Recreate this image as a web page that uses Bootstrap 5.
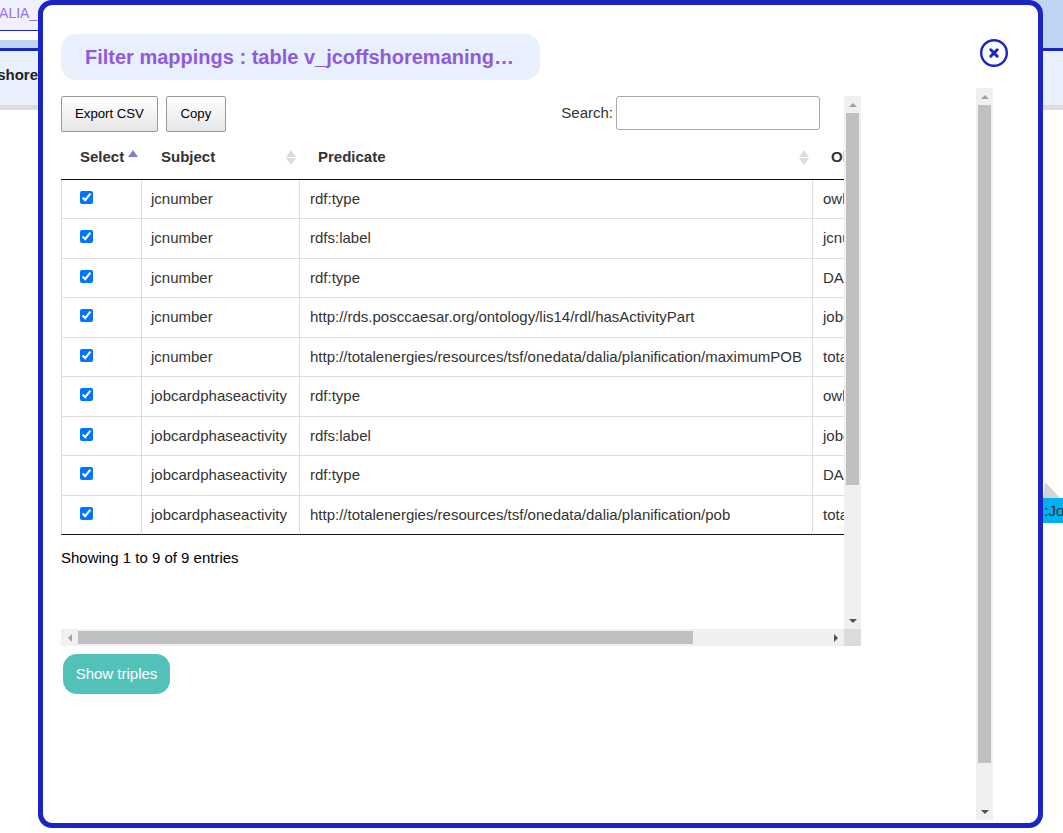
<!DOCTYPE html>
<html lang="en">
<head>
  <meta charset="UTF-8" />
  <meta name="viewport" content="width=device-width, initial-scale=1.0" />
  <title>Filter mappings</title>
  <link href="https://cdn.jsdelivr.net/npm/bootstrap@5.3.3/dist/css/bootstrap.min.css" rel="stylesheet" />
  <style>
    html, body {
      height: 100%;
      overflow: hidden;
    }
    body {
      background-color: #fff;
      color: #333;
      font-family: "Liberation Sans", Arial, sans-serif;
      font-size: 15px;
    }
    /* page behind the dialog */
    .tab-strip {
      height: 31px;
      background-color: #f1f0fd;
      border-bottom: 1px solid #1b25c3;
      color: #9575e6;
      font-size: 14px;
      padding-top: 3px;
      padding-left: 0;
      white-space: nowrap;
      overflow: hidden;
    }
    .tab-strip span {
      margin-left: -11px;
    }
    .tab-gap {
      height: 9px;
      background-color: #fff;
    }
    .back-band {
      height: 8px;
      background-color: #bfd3f2;
    }
    .back-head {
      height: 62px;
      background-color: #e8effd;
      border-top: 3px solid #1b25c3;
      border-bottom: 5px solid #dcdcdc;
      font-weight: 700;
      padding-top: 13px;
      white-space: nowrap;
      overflow: hidden;
      color: #222;
    }
    .back-head span {
      margin-left: -22px;
      display: inline-block;
    }
    .right-fill {
      position: absolute;
      top: 0;
      right: 0;
      width: 30px;
      height: 40px;
      background-color: #bfd3f2;
    }
    .node-fold {
      position: absolute;
      left: 1043px;
      top: 482px;
      width: 0;
      height: 0;
      border-left: 2px solid transparent;
      border-right: 15px solid transparent;
      border-bottom: 16px solid #d3d3d3;
    }
    .node-label {
      position: absolute;
      left: 1036px;
      top: 498px;
      width: 60px;
      height: 25px;
      background-color: #00b0f0;
      color: #333;
      line-height: 25px;
      white-space: nowrap;
    }
    /* dialog */
    .dialog-box {
      position: absolute;
      left: 38px;
      top: 0;
      width: 1005px;
      height: 828px;
      background-color: #fff;
      border: 5px solid #1b25c3;
      border-radius: 14px;
      padding: 29px 0 0 18px;
      display: flex;
    }
    .dialog-main {
      width: 800px;
    }
    .dialog-side {
      width: 32px;
      margin-left: 115px;
      display: flex;
      flex-direction: column;
    }
    .close-round {
      align-self: flex-end;
      margin-top: 5px;
      width: 28px;
      height: 28px;
      display: block;
    }
    .title-pill {
      width: 479px;
      height: 46px;
      line-height: 46px;
      padding-left: 24px;
      background-color: #e8effd;
      border-radius: 15px;
      color: #8f5bdc;
      font-size: 20px;
      font-weight: 700;
      white-space: nowrap;
    }
    .scroll-frame {
      margin-top: 16px;
      display: grid;
      grid-template-columns: 783px 17px;
      grid-template-rows: 533px 17px;
    }
    .scroll-view {
      overflow: hidden;
    }
    /* fake scrollbars, same look as the browser's */
    .vbar, .hbar {
      background-color: #f0f0f0;
      display: flex;
    }
    .vbar {
      flex-direction: column;
      align-items: center;
      width: 17px;
    }
    .hbar {
      align-items: center;
      height: 17px;
    }
    .vbar-thumb {
      width: 13px;
      background-color: #c0c0c0;
    }
    .hbar-thumb {
      height: 13px;
      background-color: #c0c0c0;
    }
    .bar-corner {
      background-color: #dcdcdc;
    }
    .bar-arrow {
      flex: 0 0 17px;
      display: flex;
      align-items: center;
      justify-content: center;
      width: 17px;
      height: 17px;
    }
    .tri-up { width: 0; height: 0; border: 4px solid transparent; border-top: 0; border-bottom: 4px solid #a3a3a3; }
    .tri-down { width: 0; height: 0; border: 4px solid transparent; border-bottom: 0; border-top: 4px solid #505050; }
    .tri-left { width: 0; height: 0; border: 4px solid transparent; border-left: 0; border-right: 4px solid #a3a3a3; }
    .tri-right { width: 0; height: 0; border: 4px solid transparent; border-right: 0; border-left: 4px solid #505050; }
    .side-bar {
      height: 732px;
      margin-top: 21px;
    }
    .tool-row {
      height: 36px;
      width: 759px;
    }
    .dt-btn {
      height: 36px;
      min-width: 60px;
      padding: 0 13px;
      background: linear-gradient(#fff, #e6e6e6);
      border: 1px solid #999;
      border-radius: 2px;
      color: #000;
      font-size: 13.2px;
      line-height: 34px;
    }
    .search-box {
      width: 204px;
      height: 34px;
      border: 1px solid #aaa;
      border-radius: 3px;
      background-color: #fff;
      margin-left: 3px;
    }
    .search-wrap {
      height: 34px;
    }
    .map-table {
      width: 1001px;
      table-layout: fixed;
      border-collapse: separate;
      border-spacing: 0;
      margin: 0;
      color: #333;
    }
    .map-table th {
      position: relative;
      height: 47.9px;
      padding: 3px 0 0 19px;
      vertical-align: middle;
      font-weight: 700;
      font-size: 15px;
      border-bottom: 1px solid #111;
      color: #333;
    }
    .map-table th:nth-child(n+3) {
      padding-left: 18px;
    }
    .map-table td {
      height: 39.5px;
      padding: 0 10px;
      vertical-align: middle;
      border-bottom: 1px solid #ddd;
      border-right: 1px solid #ddd;
      white-space: nowrap;
      color: #333;
    }
    .map-table td:first-child {
      border-left: 1px solid #ddd;
      padding-left: 18px;
    }
    .map-table td:nth-child(2) {
      padding-left: 9px;
    }
    .map-table tr:last-child td {
      border-bottom: 1px solid #111;
    }
    .map-table input {
      display: block;
      margin: -3.5px 0 0 0;
      width: 13px;
      height: 13px;
    }
    .sort-up, .sort-down {
      position: absolute;
      right: 4px;
      width: 0;
      height: 0;
      border-left: 5px solid transparent;
      border-right: 5px solid transparent;
    }
    .sort-up {
      top: 18px;
      border-bottom: 7px solid #dcdcdc;
    }
    .sort-down {
      top: 26px;
      border-top: 7px solid #dcdcdc;
    }
    .sort-up.is-active {
      border-bottom-color: #7f7fdb;
    }
    .table-info {
      margin-top: 13px;
      line-height: 20px;
    }
    .show-btn {
      display: block;
      margin: 8px 0 0 2px;
      width: 107px;
      height: 40px;
      padding: 0;
      background-color: #52c2b9;
      border: 0;
      border-radius: 14px;
      color: #fff;
      font-size: 15px;
    }
  </style>
</head>
<body>
  <div class="tab-strip"><span>DALIA_pob</span></div>
  <div class="tab-gap"></div>
  <div class="back-band"></div>
  <div class="back-head"><span>offshoremaning</span></div>
  <div class="right-fill"></div>
  <div class="node-fold"></div>
  <div class="node-label">..:Job</div>

  <div class="dialog-box" role="dialog">
    <div class="dialog-main">
      <div class="title-pill">Filter mappings : table v_jcoffshoremaning…</div>

      <div class="scroll-frame">
        <div class="scroll-view">
          <div class="tool-row d-flex justify-content-between">
            <div class="d-flex gap-2">
              <button type="button" class="dt-btn">Export CSV</button>
              <button type="button" class="dt-btn">Copy</button>
            </div>
            <label class="search-wrap d-flex align-items-center">Search:<input type="search" class="search-box" /></label>
          </div>
          <table class="table map-table">
            <colgroup>
              <col style="width: 81px" />
              <col style="width: 158px" />
              <col style="width: 513px" />
              <col style="width: 249px" />
            </colgroup>
            <thead>
              <tr>
                <th>Select<span class="sort-up is-active"></span></th>
                <th>Subject<span class="sort-up"></span><span class="sort-down"></span></th>
                <th>Predicate<span class="sort-up"></span><span class="sort-down"></span></th>
                <th>Object<span class="sort-up"></span><span class="sort-down"></span></th>
              </tr>
            </thead>
            <tbody>
              <tr><td><input type="checkbox" checked /></td><td>jcnumber</td><td>rdf:type</td><td>owl:NamedIndividual</td></tr>
              <tr><td><input type="checkbox" checked /></td><td>jcnumber</td><td>rdfs:label</td><td>jcnumber</td></tr>
              <tr><td><input type="checkbox" checked /></td><td>jcnumber</td><td>rdf:type</td><td>DALIA:JobCard</td></tr>
              <tr><td><input type="checkbox" checked /></td><td>jcnumber</td><td>http://rds.posccaesar.org/ontology/lis14/rdl/hasActivityPart</td><td>jobcardphaseactivity</td></tr>
              <tr><td><input type="checkbox" checked /></td><td>jcnumber</td><td>http://totalenergies/resources/tsf/onedata/dalia/planification/maximumPOB</td><td>totalpob</td></tr>
              <tr><td><input type="checkbox" checked /></td><td>jobcardphaseactivity</td><td>rdf:type</td><td>owl:NamedIndividual</td></tr>
              <tr><td><input type="checkbox" checked /></td><td>jobcardphaseactivity</td><td>rdfs:label</td><td>jobcardphaseactivity</td></tr>
              <tr><td><input type="checkbox" checked /></td><td>jobcardphaseactivity</td><td>rdf:type</td><td>DALIA:JobCardPhase</td></tr>
              <tr><td><input type="checkbox" checked /></td><td>jobcardphaseactivity</td><td>http://totalenergies/resources/tsf/onedata/dalia/planification/pob</td><td>totalpob</td></tr>
            </tbody>
          </table>
          <div class="table-info">Showing 1 to 9 of 9 entries</div>
        </div>
        <div class="vbar">
          <div class="bar-arrow"><div class="tri-up"></div></div>
          <div class="vbar-thumb" style="height: 372px"></div>
          <div class="flex-grow-1"></div>
          <div class="bar-arrow"><div class="tri-down"></div></div>
        </div>
        <div class="hbar">
          <div class="bar-arrow"><div class="tri-left"></div></div>
          <div class="hbar-thumb" style="width: 615px"></div>
          <div class="flex-grow-1"></div>
          <div class="bar-arrow"><div class="tri-right"></div></div>
        </div>
        <div class="bar-corner"></div>
      </div>

      <button type="button" class="show-btn">Show triples</button>
    </div>

    <div class="dialog-side">
      <svg class="close-round" viewBox="0 0 28 28" aria-label="Close">
        <circle cx="14" cy="14" r="12.8" fill="#fff" stroke="#1b25c3" stroke-width="2.4" />
        <path d="M10.8 10.8 L17.2 17.2 M17.2 10.8 L10.8 17.2" stroke="#1b25c3" stroke-width="3" stroke-linecap="round" />
      </svg>
      <div class="vbar side-bar">
        <div class="bar-arrow"><div class="tri-up"></div></div>
        <div class="vbar-thumb" style="height: 658px"></div>
        <div class="flex-grow-1"></div>
        <div class="bar-arrow"><div class="tri-down"></div></div>
      </div>
    </div>
  </div>

  <script src="https://cdn.jsdelivr.net/npm/bootstrap@5.3.3/dist/js/bootstrap.bundle.min.js"></script>
</body>
</html>
